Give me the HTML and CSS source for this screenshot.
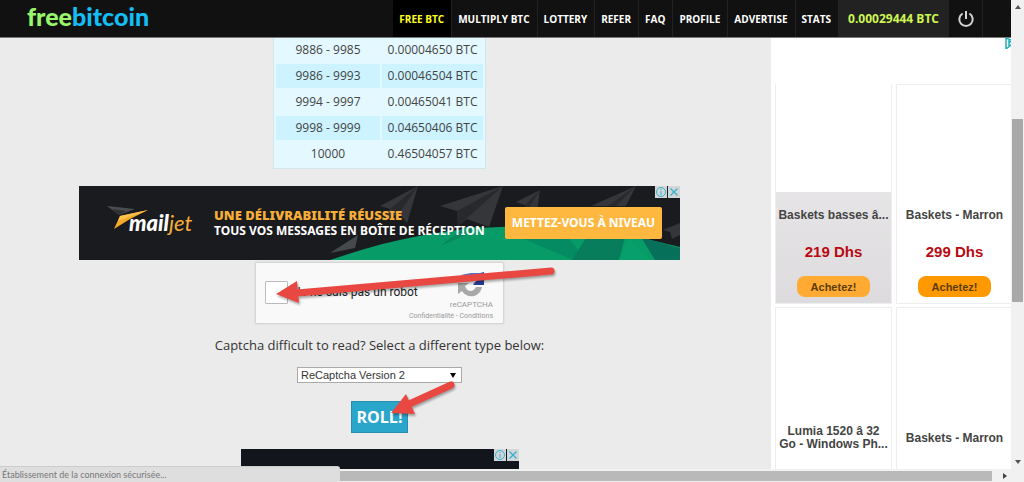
FILE: index.html
```html
<!DOCTYPE html>
<html lang="en">
<head>
<meta charset="utf-8">
<title>FreeBitcoin</title>
<link rel="stylesheet" href="styles.css">
</head>
<body>
<div class="window">
  <div class="page">
    <header class="topbar">
      <a class="logo" href="#"><span class="logo-free">free</span>bitcoin</a>
      <nav class="nav">
        <a class="nav-item active" href="#">FREE BTC</a>
        <a class="nav-item" href="#">MULTIPLY BTC</a>
        <a class="nav-item" href="#">LOTTERY</a>
        <a class="nav-item" href="#">REFER</a>
        <a class="nav-item" href="#">FAQ</a>
        <a class="nav-item" href="#">PROFILE</a>
        <a class="nav-item" href="#">ADVERTISE</a>
        <a class="nav-item" href="#">STATS</a>
        <a class="nav-item balance" href="#">0.00029444 BTC</a>
        <button class="power" type="button" aria-label="Log out">
          <svg width="18" height="18" viewBox="0 0 18 18" fill="none" stroke="#d4d4d4" stroke-width="2"><path d="M5.600 3.500a6.700 6.700 0 1 0 6.800 0M9 1v8"/></svg>
        </button>
      </nav>
    </header>
    <div class="content">
      <main class="main">
        <table class="payouts">
          <tbody>
            <tr><td>9886 - 9985</td><td>0.00004650 BTC</td></tr>
            <tr><td>9986 - 9993</td><td>0.00046504 BTC</td></tr>
            <tr><td>9994 - 9997</td><td>0.00465041 BTC</td></tr>
            <tr><td>9998 - 9999</td><td>0.04650406 BTC</td></tr>
            <tr><td>10000</td><td>0.46504057 BTC</td></tr>
          </tbody>
        </table>

        <section class="banner">
          <svg class="banner-art" viewBox="0 0 601 74" preserveAspectRatio="none" aria-hidden="true">
            <g fill="#35363a">
              <path d="M339 0 301 20l10 3-5 12 14-8 8 10z"/>
              <path d="M424 0l-63 20 17 5 1 15 9-7 22 8z"/>
              <path d="M461 4l-24 12 9 3 2 6 4-4 6 4z"/>
              <path d="M557 0l-45 20h35z"/>
              <path d="M601 37l-17 7 7 2 2 7 8-4z"/>
            </g>
            <path d="M339 0 311 23l9 4zM424 0l-46 25 1 15zM461 4l-15 15 2 6zM557 0l-28 20h8z" fill="#28292d"/>
            <path d="M251 74C310 54 360 43 421 41c65-2 125 6 180 20v13z" fill="#079b67"/>
            <path d="M279 49l-28 18 25-5z" fill="#46494c"/>
            <path d="M361 60l25-19 20 0z" fill="#078a5b"/>
            <path d="M445 53h45l18 21h-14z" fill="#048b62"/>
            <path d="M510 47h37l-7 27h-47z" fill="#087d5c"/>
            <path d="M550 51l-10 23h30z" fill="#07a06c"/>
            <path d="M562 51l39 11v12h-25z" fill="#06705b"/>
          </svg>
          <svg class="mailjet-mark" viewBox="0 0 42 24" aria-hidden="true">
            <path d="M0 0l28 3-16 6z" fill="#4b4c50"/><path d="M5 3l14 2-7 4z" fill="#303136"/>
            <path d="M41 4 13 10 7 23l16-10z" fill="#f6a928"/><path d="M41 4 13 10l-2 5z" fill="#ffc34b"/>
          </svg>
          <span class="mailjet"><b>mail</b><i>jet</i></span>
          <div class="pitch"><strong>UNE DÉLIVRABILITÉ RÉUSSIE</strong><span>TOUS VOS MESSAGES EN BOÎTE DE RÉCEPTION</span></div>
          <a class="cta" href="#">METTEZ-VOUS À NIVEAU</a>
          <div class="ad-tools">
            <svg viewBox="0 0 12 12" fill="none" stroke="#32b3cb"><circle cx="6" cy="6" r="4.5"/><path d="M6 5v4M6 3v1"/></svg>
            <svg viewBox="0 0 12 12" fill="none" stroke="#32b3cb" stroke-width="1.3"><path d="M2.500 2.500l7 7M9.500 2.500l-7 7"/></svg>
          </div>
        </section>

        <section class="captcha">
          <label class="robot"><input type="checkbox"><span>Je ne suis pas un robot</span></label>
          <div class="captcha-brand">
            <svg width="28" height="28" viewBox="0 0 28 28" aria-hidden="true">
              <path d="M4 4 14 2h9l4-1v12H16l4-4C16 6 11 7 8 10z" fill="#4a6fd0"/>
              <path d="M20 5l7-4v13H16l4-4z" fill="#2a3f9c"/>
              <path d="M1 12h11L8 15c2 6 8 7 11 1h6c-2 10-14 13-20 4l-4 3z" fill="#a9a9a9"/>
            </svg>
            <span class="brand-name">reCAPTCHA</span>
            <span class="legal"><a href="#">Confidentialité</a> - <a href="#">Conditions</a></span>
          </div>
        </section>

        <label class="type-label" for="captcha-type">Captcha difficult to read? Select a different type below:</label>
        <div class="select-wrap">
          <select id="captcha-type"><option>ReCaptcha Version 2</option></select>
          <svg class="caret" viewBox="0 0 6 6" aria-hidden="true"><path d="M0 1h6L3 6z"/></svg>
        </div>
        <button class="roll" type="button">ROLL!</button>

        <section class="banner second" aria-label="Advertisement">
          <div class="ad-tools">
            <svg viewBox="0 0 12 12" fill="none" stroke="#32b3cb"><circle cx="6" cy="6" r="4.5"/><path d="M6 5v4M6 3v1"/></svg>
            <svg viewBox="0 0 12 12" fill="none" stroke="#32b3cb" stroke-width="1.3"><path d="M2.500 2.500l7 7M9.500 2.500l-7 7"/></svg>
          </div>
        </section>

        <svg class="arrow arrow-captcha" viewBox="0 0 290 40" aria-hidden="true">
          <path d="M276 7 22 29" stroke="#e94842" stroke-width="7" stroke-linecap="round"/><path d="M1 30 22 17l2 22z" fill="#e94842"/>
        </svg>
        <svg class="arrow arrow-roll" viewBox="0 0 70 40" aria-hidden="true">
          <path d="M60 6 16 26" stroke="#e94842" stroke-width="7" stroke-linecap="round"/><path d="M0 34 15 15l9 20z" fill="#e94842"/>
        </svg>
      </main>

      <aside class="products">
        <svg class="adchoice" width="6" height="11" viewBox="0 0 6 11" fill="none" stroke="#20aebd" stroke-width="1.5" aria-hidden="true"><path d="M6 2 1 0v11l5-4M6 4 4 3v5l2-1"/></svg>
        <article class="card hovered">
          <div class="photo"></div>
          <h3>Baskets basses â...</h3><p class="price">219 Dhs</p><button class="buy" type="button">Achetez!</button>
        </article>
        <article class="card">
          <div class="photo"></div>
          <h3>Baskets - Marron</h3><p class="price">299 Dhs</p><button class="buy" type="button">Achetez!</button>
        </article>
        <article class="card">
          <div class="photo"></div>
          <h3>Lumia 1520 â 32<br>Go - Windows Ph...</h3>
        </article>
        <article class="card">
          <div class="photo"></div>
          <h3>Baskets - Marron</h3>
        </article>
      </aside>
    </div>
  </div>

  <div class="vscroll" aria-hidden="true">
    <svg viewBox="0 0 6 4"><path d="M0 4h6L3 0z"/></svg>
    <div class="vtrack"><div class="vthumb"></div></div>
    <svg viewBox="0 0 6 4"><path d="M0 0h6L3 4z"/></svg>
  </div>
  <div class="hscroll" aria-hidden="true">
    <div class="hthumb"></div>
    <svg viewBox="0 0 4 6"><path d="M0 0v6l4-3z"/></svg>
  </div>
  <div class="status">Établissement de la connexion sécurisée...</div>
</div>
</body>
</html>
```

FILE: styles.css
```css
* { box-sizing: border-box; }
body { margin: 0; font-family: "Open Sans", sans-serif; color: #444; background: #ebebeb; }
a { color: inherit; text-decoration: none; }
button { border: 0; padding: 0; font-family: inherit; cursor: pointer; }

.window {
  position: relative;
  display: grid;
  grid-template: minmax(0, 1fr) 13px / minmax(0, 1fr) 13px;
  height: 100vh;
  overflow: hidden;
}
.page { display: flex; flex-direction: column; min-height: 0; overflow: hidden; }

/* Top bar */
.topbar {
  display: flex;
  flex: none;
  justify-content: space-between;
  height: 38px;
  padding: 0 28px 0 27px;
  background: #111;
  border-bottom: 1px solid #777;
}
.logo { color: #14bdf4; font: 900 25px/33px Lato, sans-serif; }
.logo-free { color: #98f66c; }
.nav { display: flex; }
.nav-item {
  display: flex;
  align-items: center;
  padding: 0 7px 0 6px;
  border-right: 1px solid #222;
  color: #fff;
  font-size: 10px;
  font-weight: 700;
}
.nav-item.active { background: #000; color: #ff2; }
.nav-item.balance { padding: 0 9px; background: #222; color: #cdf552; font-size: 12px; }
.power {
  display: flex;
  align-items: center;
  justify-content: center;
  width: 34px;
  background: #111;
  border-right: 1px solid #222;
}

.content { display: flex; flex: 1; min-height: 0; }
.main {
  position: relative;
  display: flex;
  flex: 1;
  flex-direction: column;
  align-items: center;
  padding-right: 12px;
  overflow: hidden;
  background: #ebebeb;
}

/* Payout table */
.payouts {
  flex: none;
  width: 213px;
  border: 1px solid #d3e6ea;
  border-top: 0;
  border-spacing: 2px;
  margin-top: -2px;
  background: #e4f9ff;
  font-size: 12px;
  text-align: center;
}
.payouts td { height: 24px; padding: 0; line-height: 24px; }
.payouts td:last-child { width: 101px; }
.payouts tr:nth-child(even) td { background: #ccf3ff; }

/* Banner */
.banner {
  position: relative;
  display: flex;
  flex: none;
  align-items: center;
  width: 601px;
  height: 74px;
  margin-top: 17px;
  padding: 0 18px 0 28px;
  background: #1a1b1f;
}
.banner-art { position: absolute; inset: 0; width: 100%; height: 100%; }
.mailjet-mark { position: relative; width: 42px; height: 24px; margin-right: -20px; margin-bottom: 10px; }
.mailjet { position: relative; color: #fff; font: italic 22px/28px Lato, sans-serif; width: 85px; }
.mailjet b { font-weight: 900; }
.mailjet i { color: #f6ae38; }
.pitch {
  position: relative;
  display: flex;
  flex: 1;
  flex-direction: column;
  color: #fff;
  font: 700 12px/16px "Noto Sans", sans-serif;
  white-space: nowrap;
}
.pitch strong { color: #f6ae38; font-size: 13px; }
.cta {
  position: relative;
  width: 157px;
  border-radius: 2px;
  background: #ffb83f;
  color: #fff;
  font: 700 12px/32px "Noto Sans", sans-serif;
  text-align: center;
  white-space: nowrap;
}
.ad-tools { position: absolute; top: 0; right: 0; display: flex; gap: 1px; }
.ad-tools svg { width: 12px; height: 12px; background: #d2d6d8; }
.banner.second { width: 278px; margin-top: 16px; background: #12151b; }

/* Captcha box */
.captcha {
  display: flex;
  flex: none;
  justify-content: space-between;
  width: 249px;
  height: 62px;
  margin-top: 2px;
  padding: 0 10px 0 9px;
  border: 1px solid #d6d6d6;
  border-radius: 2px;
  background: #f9f9f9;
  box-shadow: 0 0 2px #ccc;
  font-family: Roboto, sans-serif;
}
.robot { display: flex; align-items: center; gap: 6px; height: 58px; color: #222; font-size: 12px; white-space: nowrap; }
.robot input { appearance: none; width: 23px; height: 23px; margin: 0; border: 1px solid #bbb; border-radius: 1px; background: #fff; }
.captcha-brand { display: flex; flex-direction: column; align-items: flex-end; width: 60px; padding-top: 8px; color: #999; }
.captcha-brand svg { flex: none; margin-right: 8px; }
.brand-name { font-size: 8px; line-height: 12px; }
.legal { font-size: 7px; line-height: 10px; white-space: nowrap; }

.type-label { flex: none; margin-top: 11px; color: #333; font-size: 13px; line-height: 20px; }
.select-wrap { position: relative; display: flex; flex: none; width: 165px; margin-top: 12px; }
.select-wrap select {
  appearance: none;
  width: 100%;
  height: 16px;
  padding: 0 3px;
  border: 1px solid #aaa;
  border-radius: 0;
  background: #fff;
  color: #333;
  font: 11px/14px "Liberation Sans", sans-serif;
}
.caret { position: absolute; top: 5px; right: 6px; width: 6px; height: 6px; }
.roll {
  flex: none;
  width: 57px;
  height: 32px;
  margin-top: 18px;
  border: 1px solid #2790b0;
  background: #2ba6cb;
  color: #fff;
  font-size: 16px;
  font-weight: 700;
}

/* Annotations over the form */
.arrow { position: absolute; overflow: visible; fill: none; filter: drop-shadow(1px 2px 1px #0005); }
.arrow-captcha { top: 226px; left: 275px; width: 290px; height: 40px; }
.arrow-roll { top: 341px; left: 391px; width: 70px; height: 40px; }

/* Product ads */
.products {
  position: relative;
  display: grid;
  flex: none;
  grid-template-columns: 117px 117px;
  grid-auto-rows: 220px;
  align-content: start;
  gap: 3px 4px;
  width: 240px;
  padding: 46px 0 0 4px;
  overflow: hidden;
  background: #fff;
  font-family: "Liberation Sans", sans-serif;
}
.adchoice { position: absolute; top: 0; right: 0; }
.card {
  display: flex;
  flex-direction: column;
  align-items: center;
  border: 1px solid #eee;
  background: #fff;
  text-align: center;
}
.card.hovered { border-top-color: #fff; background: linear-gradient(#efeeef, #dddbdd); }
.photo { flex: none; width: 100%; height: 107px; background: #fff; }
.card h3 {
  display: flex;
  flex: none;
  align-items: center;
  height: 46px;
  margin: 0;
  color: #444;
  font-size: 12px;
  line-height: 13px;
  white-space: nowrap;
}
.price { margin: 4px 0 0; color: #b90a12; font-size: 15px; font-weight: 700; line-height: 20px; }
.buy {
  width: 73px;
  height: 21px;
  margin-top: 14px;
  border-radius: 8px;
  background: #f90;
  color: #5c3d05;
  font-size: 11px;
  font-weight: 700;
}
.hovered .buy { background: #ffaa33; }

/* Browser scrollbars and status */
.vscroll { display: flex; flex-direction: column; align-items: center; gap: 4px; padding: 5px 0; background: #f1f1f1; }
.vscroll svg { flex: none; width: 6px; height: 4px; fill: #555; }
.vtrack { flex: 1; width: 11px; padding-top: 106px; }
.vthumb { height: 183px; background: #a9a9a9; }
.hscroll { grid-column: 1 / -1; display: flex; align-items: center; gap: 11px; padding-right: 17px; background: #f1f1f1; }
.hthumb { flex: 1; height: 10px; background: #b9b9b9; }
.hscroll svg { width: 4px; height: 6px; fill: #444; }
.status {
  position: absolute;
  bottom: 0;
  left: 0;
  width: 340px;
  padding-left: 2px;
  border-top: 1px solid #ccc;
  border-radius: 0 3px 0 0;
  background: #dedede;
  color: #777;
  font: 9px/15px Lato, sans-serif;
}
```
